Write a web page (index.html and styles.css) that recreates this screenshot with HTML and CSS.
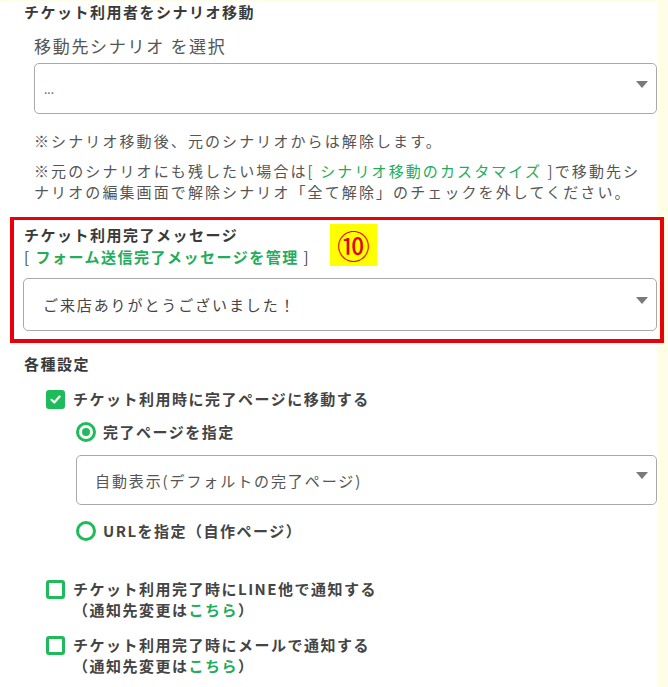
FILE: index.html
```html
<!DOCTYPE html>
<html lang="ja">
<head>
<meta charset="utf-8">
<link rel="stylesheet" href="styles.css">
</head>
<body>
<div class="main">
  <h2 class="title">チケット利用者をシナリオ移動</h2>
  <div class="field-label">移動先シナリオ を選択</div>
  <div class="select sel1"><span class="sel-text dots">...</span><span class="arrow"></span></div>
  <p class="note n1">※シナリオ移動後、元のシナリオからは解除します。</p>
  <p class="note n2">※元のシナリオにも残したい場合は[ <span class="link">シナリオ移動のカスタマイズ</span> ]で移動先シナリオの編集画面で解除シナリオ「全て解除」のチェックを外してください。</p>

  <div class="redbox">
    <div class="box-title">チケット利用完了メッセージ</div>
    <div class="box-link">[ <span class="link bold">フォーム送信完了メッセージを管理</span> ]</div>
    <div class="select sel2"><span class="sel-text">ご来店ありがとうございました！</span><span class="arrow"></span></div>
    <div class="badge">⑩</div>
  </div>

  <div class="section-title">各種設定</div>
  <div class="row check-row">
    <span class="cb checked"><svg width="13" height="13" viewBox="0 0 13 13"><path d="M2.5 6.8 L5.3 9.4 L10.6 3.6" fill="none" stroke="#fff" stroke-width="2.2" stroke-linecap="round" stroke-linejoin="round"/></svg></span>
    <span class="opt">チケット利用時に完了ページに移動する</span>
  </div>
  <div class="row radio-row r1">
    <span class="radio on"></span>
    <span class="opt">完了ページを指定</span>
  </div>
  <div class="select sel3"><span class="sel-text">自動表示(デフォルトの完了ページ)</span><span class="arrow"></span></div>
  <div class="row radio-row r2">
    <span class="radio"></span>
    <span class="opt">URLを指定（自作ページ）</span>
  </div>

  <div class="row notify n-line">
    <span class="cb"></span>
    <span class="opt">チケット利用完了時にLINE他で通知する<br>（通知先変更は<span class="link">こちら</span>）</span>
  </div>
  <div class="row notify n-mail">
    <span class="cb"></span>
    <span class="opt">チケット利用完了時にメールで通知する<br>（通知先変更は<span class="link">こちら</span>）</span>
  </div>
</div>
</body>
</html>
```
FILE: styles.css
```css
html, body {
  margin: 0;
  padding: 0;
}
body {
  background: #fffde6;
  font-family: "Noto Sans CJK JP", "Noto Sans", sans-serif;
  color: #444;
  width: 668px;
  height: 687px;
  overflow: hidden;
}
.main {
  width: 658px;
  height: 687px;
  background: #fff;
}
.title {
  margin: 1px 0 0 0;
  padding-left: 24px;
  font-size: 15px;
  line-height: 22px;
  font-weight: bold;
  letter-spacing: 0.1em;
  color: #3a3a3a;
}
.field-label {
  margin-top: 12px;
  padding-left: 34px;
  font-size: 17px;
  line-height: 22px;
  letter-spacing: 1.7px;
  color: #555;
}
.select {
  display: flex;
  align-items: center;
  justify-content: space-between;
  box-sizing: border-box;
  border: 1px solid #a9a9a9;
  border-radius: 5px;
  background: #fff;
  padding: 0 8px 0 0;
}
.sel-text {
  font-size: 15px;
  letter-spacing: 1.9px;
  color: #555;
}
.arrow {
  width: 0;
  height: 0;
  border-left: 6.5px solid transparent;
  border-right: 6.5px solid transparent;
  border-top: 7px solid #7a7a7a;
  margin-bottom: 9px;
}
.sel1 {
  margin: 6px 0 0 34px;
  width: 623px;
  height: 51px;
  padding-left: 9px;
}
.dots {
  font-size: 12px;
  letter-spacing: 0;
  color: #666;
}
.note {
  margin: 0;
  padding-left: 34px;
  padding-right: 8px;
  font-size: 15px;
  line-height: 21px;
  letter-spacing: 2.1px;
  color: #555;
}
.n1 { margin-top: 16px; }
.n2 { margin-top: 9px; }
.link {
  color: #22ad5c;
}
.bold { font-weight: bold; }

.redbox {
  position: relative;
  margin: 15px 0 0 10px;
  width: 654px;
  height: 126px;
  box-sizing: border-box;
  border: 4px solid #e8000b;
  border-top-width: 3.5px;
  padding: 4px 3px 0 9px;
}
.box-title {
  padding-left: 1px;
  font-size: 15px;
  line-height: 22px;
  font-weight: bold;
  letter-spacing: 0.1em;
  color: #3a3a3a;
}
.box-link {
  padding-left: 1px;
  font-size: 15px;
  line-height: 22px;
  letter-spacing: 0.1em;
  color: #444;
}
.sel2 {
  margin-top: 10px;
  height: 53px;
  padding-left: 19px;
}
.sel2 .sel-text { color: #444; }
.badge {
  position: absolute;
  left: 316px;
  top: 4px;
  width: 47px;
  height: 42px;
  background: #ffff00;
  color: #e60012;
  font-size: 33px;
  line-height: 42px;
  text-align: center;
  font-family: "Noto Sans CJK JP", sans-serif;
}

.section-title {
  margin-top: 10px;
  padding-left: 24px;
  font-size: 15px;
  line-height: 22px;
  font-weight: bold;
  letter-spacing: 0.1em;
  color: #3a3a3a;
}
.row {
  display: flex;
  align-items: center;
  gap: 8px;
}
.opt {
  font-size: 15px;
  line-height: 22px;
  font-weight: bold;
  letter-spacing: 0.1em;
  color: #444;
}
.check-row {
  margin-top: 13px;
  padding-left: 46px;
}
.cb {
  width: 19px;
  height: 19px;
  box-sizing: border-box;
  border: 3px solid #1fbb5b;
  border-radius: 3px;
  flex: none;
  display: flex;
  align-items: center;
  justify-content: center;
}
.cb.checked {
  background: #1fbb5b;
}
.radio-row {
  padding-left: 76px;
  gap: 7px;
}
.r1 { margin-top: 11px; }
.r2 { margin-top: 15px; }
.radio {
  width: 20px;
  height: 20px;
  box-sizing: border-box;
  border: 3px solid #1fbb5b;
  border-radius: 50%;
  flex: none;
  display: flex;
  align-items: center;
  justify-content: center;
}
.radio.on::after {
  content: "";
  width: 8px;
  height: 8px;
  border-radius: 50%;
  background: #1fbb5b;
}
.sel3 {
  margin: 12px 0 0 76px;
  width: 581px;
  height: 50px;
  padding-left: 18px;
}
.notify {
  padding-left: 46px;
  align-items: flex-start;
}
.notify .cb { margin-top: 2px; }
.notify .opt { line-height: 21px; }
.n-line { margin-top: 36px; }
.n-mail { margin-top: 14px; }
.notify .link { font-weight: bold; }
```
